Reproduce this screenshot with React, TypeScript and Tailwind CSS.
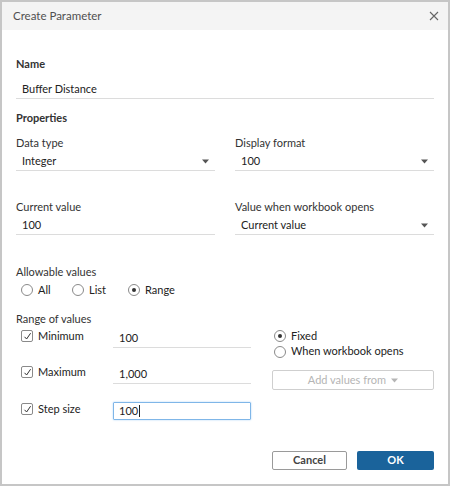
import React from "react";

const Arrow = ({ color = "#555" }: { color?: string }) => (
  <svg width="7" height="5" viewBox="0 0 7 5" className="shrink-0">
    <path d="M0 0.5 H7 L3.5 4.5 Z" fill={color} />
  </svg>
);

const Radio = ({ checked }: { checked?: boolean }) => (
  <span className="w-[12px] h-[12px] rounded-full border border-[#8a8a8a] bg-white flex items-center justify-center shrink-0">
    {checked && <span className="w-[4px] h-[4px] rounded-full bg-[#333]" />}
  </span>
);

const Check = () => (
  <span className="w-[12px] h-[12px] rounded-[2px] border border-[#8a8a8a] bg-white flex items-center justify-center shrink-0">
    <svg width="9" height="9" viewBox="0 0 9 9">
      <path d="M1.5 4.8 L3.6 7 L7.6 1.2" fill="none" stroke="#333" strokeWidth="1" />
    </svg>
  </span>
);

const Label = ({ children, className = "" }: { children: React.ReactNode; className?: string }) => (
  <div className={`h-[16px] leading-[16px] text-[11px] text-[#333] ${className}`}>{children}</div>
);

const Field = ({ value, dropdown }: { value: string; dropdown?: boolean }) => (
  <div className="h-[19px] border-b border-[#dcdcdc] flex items-center pl-[6px] pr-[6px] text-[11px] text-[#222]">
    <span className="flex-1">{value}</span>
    {dropdown && <Arrow />}
  </div>
);

export default function App() {
  return (
    <div
      className="w-[450px] h-[486px] border-2 border-[#c6c6c6] bg-white flex flex-col"
      style={{ fontFamily: "Lato, 'Noto Sans', sans-serif" }}
    >
      <div className="h-[28px] bg-[#f4f4f4] flex items-center pl-[11px] pr-[9px]">
        <span className="flex-1 text-[11.5px] text-[#505050]">Create Parameter</span>
        <svg width="10" height="10" viewBox="0 0 10 10">
          <path d="M1 1 L9 9 M9 1 L1 9" stroke="#666" strokeWidth="1.1" />
        </svg>
      </div>

      <div className="px-[14px] flex flex-col">
        <Label className="mt-[26px] font-bold">Name</Label>
        <div className="mt-[8px]">
          <Field value="Buffer Distance" />
        </div>
        <Label className="mt-[11px] font-bold">Properties</Label>

        <div className="grid grid-cols-2 gap-x-[20px]">
          <div className="flex flex-col">
            <Label className="mt-[9px]">Data type</Label>
            <div className="mt-[1px]">
              <Field value="Integer" dropdown />
            </div>
            <Label className="mt-[28px]">Current value</Label>
            <div className="mt-[1px]">
              <Field value="100" />
            </div>
          </div>
          <div className="flex flex-col">
            <Label className="mt-[9px]">Display format</Label>
            <div className="mt-[1px]">
              <Field value="100" dropdown />
            </div>
            <Label className="mt-[28px]">Value when workbook opens</Label>
            <div className="mt-[1px]">
              <Field value="Current value" dropdown />
            </div>
          </div>
        </div>

        <Label className="mt-[29px]">Allowable values</Label>
        <div className="mt-[2px] h-[16px] flex items-center pl-[5px] text-[11px] text-[#222]">
          <div className="w-[51px] flex items-center gap-[5px]">
            <Radio />
            <span>All</span>
          </div>
          <div className="w-[56px] flex items-center gap-[5px]">
            <Radio />
            <span>List</span>
          </div>
          <div className="flex items-center gap-[5px]">
            <Radio checked />
            <span>Range</span>
          </div>
        </div>

        <Label className="mt-[13px]">Range of values</Label>

        <div className="mt-[1px] grid grid-cols-[97px_138px_21px_162px] items-start text-[11px] text-[#222]">
          {/* Row 1 */}
          <div className="h-[16px] flex items-center gap-[5px] pl-[5px]">
            <Check />
            <span>Minimum</span>
          </div>
          <div className="mt-[1px] h-[19px] border-b border-[#dcdcdc] flex items-center pl-[6px]">100</div>
          <div />
          <div className="flex flex-col pl-[2px]">
            <div className="h-[16px] flex items-center gap-[5px]">
              <Radio checked />
              <span>Fixed</span>
            </div>
            <div className="h-[15px] flex items-center gap-[5px]">
              <Radio />
              <span>When workbook opens</span>
            </div>
          </div>

          {/* Row 2 */}
          <div className="mt-[5px] h-[16px] flex items-center gap-[5px] pl-[5px]">
            <Check />
            <span>Maximum</span>
          </div>
          <div className="mt-[6px] h-[19px] border-b border-[#dcdcdc] flex items-center pl-[6px]">1,000</div>
          <div />
          <div className="mt-[11px] h-[20px] border border-[#cfcfcf] rounded-[2px] flex items-center justify-center gap-[5px] text-[#b5b5b5]">
            <span>Add values from</span>
            <Arrow color="#b5b5b5" />
          </div>

          {/* Row 3 */}
          <div className="mt-[11px] h-[16px] flex items-center gap-[5px] pl-[5px]">
            <Check />
            <span>Step size</span>
          </div>
          <div className="mt-[12px] h-[18px] border border-[#7fb6e8] rounded-[1px] shadow-[0_0_2px_#a9d0f5] flex items-center pl-[5px]">
            <span>100</span>
            <span className="w-[1px] h-[12px] bg-[#222] ml-[1px]" />
          </div>
          <div />
          <div />
        </div>

        <div className="mt-[31px] flex justify-end gap-[10px]">
          <button className="w-[75px] h-[19px] border border-[#9a9a9a] rounded-[2px] bg-white text-[11px] font-bold text-[#444] flex items-center justify-center">
            Cancel
          </button>
          <button className="w-[77px] h-[19px] rounded-[2px] bg-[#1a639b] text-[11px] font-bold text-white flex items-center justify-center">
            OK
          </button>
        </div>
      </div>
    </div>
  );
}
